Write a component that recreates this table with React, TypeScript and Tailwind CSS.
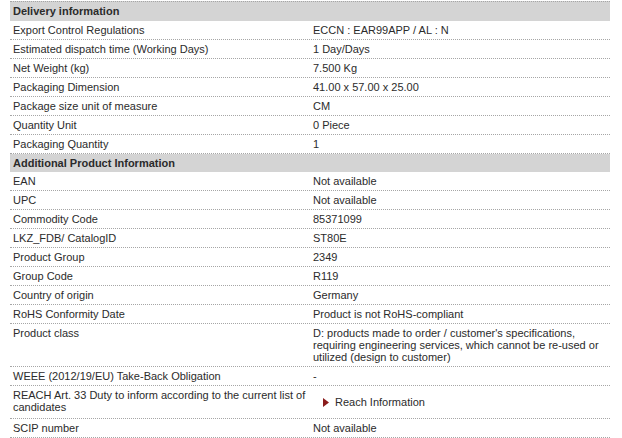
import React from 'react'

type Row = { label: React.ReactNode; value: React.ReactNode; middle?: boolean }

const delivery: Row[] = [
  { label: 'Export Control Regulations', value: 'ECCN : EAR99APP / AL : N' },
  { label: 'Estimated dispatch time (Working Days)', value: '1 Day/Days' },
  { label: 'Net Weight (kg)', value: '7.500 Kg' },
  { label: 'Packaging Dimension', value: '41.00 x 57.00 x 25.00' },
  { label: 'Package size unit of measure', value: 'CM' },
  { label: 'Quantity Unit', value: '0 Piece' },
  { label: 'Packaging Quantity', value: '1' },
]

const ReachLink = () => (
  <span className="flex items-center pl-[10px]">
    <svg width="6" height="9" viewBox="0 0 6 9" className="mr-[6px]">
      <polygon points="0,0 6,4.5 0,9" fill="#8a1c1c" />
    </svg>
    <span>Reach Information</span>
  </span>
)

const additional: Row[] = [
  { label: 'EAN', value: 'Not available' },
  { label: 'UPC', value: 'Not available' },
  { label: 'Commodity Code', value: '85371099' },
  { label: 'LKZ_FDB/ CatalogID', value: 'ST80E' },
  { label: 'Product Group', value: '2349' },
  { label: 'Group Code', value: 'R119' },
  { label: 'Country of origin', value: 'Germany' },
  { label: 'RoHS Conformity Date', value: 'Product is not RoHS-compliant' },
  {
    label: 'Product class',
    value:
      "D: products made to order / customer's specifications, requiring engineering services, which cannot be re-used or utilized (design to customer)",
  },
  { label: 'WEEE (2012/19/EU) Take-Back Obligation', value: '-' },
  {
    label: 'REACH Art. 33 Duty to inform according to the current list of candidates',
    value: <ReachLink />,
    middle: true,
  },
  { label: 'SCIP number', value: 'Not available' },
]

function Header({ title, first }: { title: string; first?: boolean }) {
  return (
    <div
      className={
        'bg-[#d4d4d4] px-[3px] pt-[3px] font-bold ' +
        (first ? 'pb-[4px] border-t border-dotted border-[#a6a6a6]' : 'pb-[3px]')
      }
    >
      {title}
    </div>
  )
}

function DataRow({ row }: { row: Row }) {
  return (
    <div className="flex border-b border-dotted border-[#a6a6a6]">
      <div
        className={
          'w-[300px] shrink-0 pl-[3px] pr-[2px] pt-[3px] ' + (row.middle ? 'pb-[5px]' : 'pb-[3px]')
        }
      >
        {row.label}
      </div>
      <div className={'flex-1 px-[3px] py-[3px] pr-[8px] ' + (row.middle ? 'self-center' : '')}>
        {row.value}
      </div>
    </div>
  )
}

export default function App() {
  return (
    <div className="w-[622px] h-[438px] bg-white pt-px overflow-hidden">
      <div
        className="w-[600px] ml-[10px] text-[11px] leading-[12px] text-[#2b2b2b]"
        style={{ fontFamily: '"Liberation Sans", Arial, sans-serif' }}
      >
        <Header title="Delivery information" first />
        {delivery.map((r, i) => (
          <DataRow key={i} row={r} />
        ))}
        <Header title="Additional Product Information" />
        {additional.map((r, i) => (
          <DataRow key={i} row={r} />
        ))}
      </div>
    </div>
  )
}
